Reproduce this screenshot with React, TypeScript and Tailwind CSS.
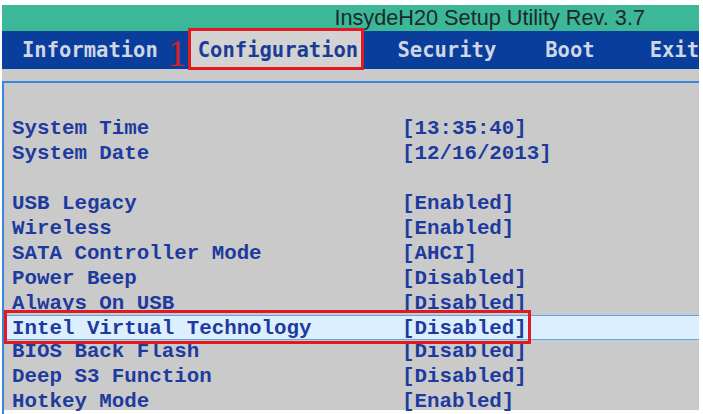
import React from "react"

const rows: { label: string; value: string; selected?: boolean }[] = [
  { label: "System Time", value: "[13:35:40]" },
  { label: "System Date", value: "[12/16/2013]" },
  { label: "", value: "" },
  { label: "USB Legacy", value: "[Enabled]" },
  { label: "Wireless", value: "[Enabled]" },
  { label: "SATA Controller Mode", value: "[AHCI]" },
  { label: "Power Beep", value: "[Disabled]" },
  { label: "Always On USB", value: "[Disabled]" },
  { label: "Intel Virtual Technology", value: "[Disabled]", selected: true },
  { label: "BIOS Back Flash", value: "[Disabled]" },
  { label: "Deep S3 Function", value: "[Disabled]" },
  { label: "Hotkey Mode", value: "[Enabled]" },
]

const tabFont = { fontFamily: "'DejaVu Sans Mono', monospace" }
const bodyFont = { fontFamily: "'Liberation Mono', 'DejaVu Sans Mono', monospace" }

export default function App() {
  return (
    <div className="w-[703px] h-[414px] overflow-hidden bg-white pl-[2px] pr-[4px] pt-[5px] pb-[4px]">
      <div className="flex h-full flex-col bg-[#cacaca]">
        {/* title strip */}
        <div
          className="flex h-[26px] shrink-0 items-end justify-end bg-[#3cb899] pr-[54px] pb-[2px] text-[21.7px] leading-none text-[#1c2a2a]"
          style={{ fontFamily: "'Liberation Sans', Arial, sans-serif" }}
        >
          InsydeH20 Setup Utility Rev. 3.7
        </div>

        {/* menu bar */}
        <div
          className="flex h-[38px] shrink-0 items-center bg-[#0a3e9c] text-[20.5px] font-bold leading-none text-[#cfd6e4]"
          style={tabFont}
        >
          <span className="ml-[20px]">Information</span>
          <span
            className="ml-[10px] mt-[6px] w-[16px] text-[37px] font-normal leading-none text-[#d8202a]"
            style={{ fontFamily: "'Liberation Serif', serif" }}
          >
            1
          </span>
          <div className="relative ml-[6px] flex h-full w-[179px] items-center bg-[#d3d3d3] pl-[8px] text-[#1a3c94]">
            Configuration
            <div className="absolute -top-[3px] -bottom-[1px] -left-[2px] -right-[1px] border-[3px] border-[#e01a22]" />
          </div>
          <span className="ml-[35px]">Security</span>
          <span className="ml-[49px]">Boot</span>
          <span className="ml-[55px]">Exit</span>
        </div>

        {/* content panel */}
        <div className="mt-[12px] flex-1 border-l-[2px] border-t-[2px] border-[#3a86dc] pt-[33px]">
          <div className="text-[20.8px] font-bold leading-[25px] text-[#1d3b9e]" style={bodyFont}>
            {rows.map((r, i) => (
              <div
                key={i}
                className={
                  r.selected
                    ? "relative -my-px grid h-[25px] grid-cols-[390px_1fr] border-y border-[#5aa6e6] bg-[#dcefff] pl-[8px]"
                    : "grid h-[25px] grid-cols-[390px_1fr] pl-[8px]"
                }
              >
                <span className="whitespace-pre">{r.label}</span>
                <span className="whitespace-pre">{r.value}</span>
                {r.selected && (
                  <div className="absolute -top-[6px] -bottom-[5px] left-0 w-[527px] border-[3px] border-[#e01a22]" />
                )}
              </div>
            ))}
          </div>
        </div>
      </div>
    </div>
  )
}
